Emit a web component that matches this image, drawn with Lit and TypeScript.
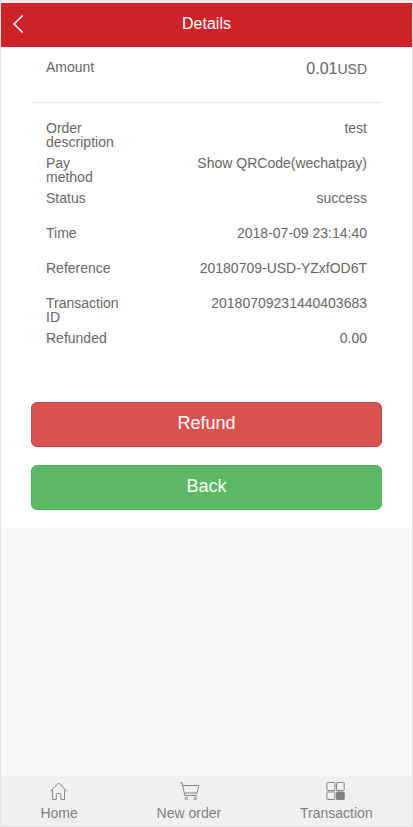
import { LitElement, html, css, svg } from "lit";
import { customElement } from "lit/decorators.js";

const rows: [string, string][] = [
  ["Order description", "test"],
  ["Pay method", "Show QRCode(wechatpay)"],
  ["Status", "success"],
  ["Time", "2018-07-09 23:14:40"],
  ["Reference", "20180709-USD-YZxfOD6T"],
  ["Transaction ID", "20180709231440403683"],
  ["Refunded", "0.00"],
];

const home = svg`<path d="M1.2 10.4 9.7 1.9 18.2 10.4M3.6 9V18.5H7.3V13.5Q7.3 12.5 8.3 12.5H10.8Q11.8 12.5 11.8 13.5V18.5H15.5V9"/>`;
const cart = svg`<path d="M0.9 1.7H3.1L5.8 14.5H18.2M4 4.5H19.8L18 12H5.4"/><circle cx="7.4" cy="17.4" r="1.3"/><circle cx="16.3" cy="17.4" r="1.3"/>`;
const grid = svg`<rect x="0.9" y="1.5" width="8" height="8" rx="0.5"/><rect x="10.5" y="1.5" width="7.7" height="8" rx="0.5"/><rect x="0.9" y="11" width="8" height="7.5" rx="0.5"/><rect class="solid" x="10.5" y="11" width="7.7" height="7.5" rx="0.5"/>`;

@customElement("app-root")
export class AppRoot extends LitElement {
  static styles = css`
    :host {
      display: flex;
      flex-direction: column;
      box-sizing: border-box;
      height: 827px;
      border: 1px solid #e2e2e2;
      border-top: 3px solid #e9edf0;
      background: #f9f9f9;
      font: 14px/14px "Liberation Sans", Arial, sans-serif;
      color: #666;
    }
    header {
      display: grid;
      grid-template-columns: 44px 1fr 44px;
      align-items: center;
      height: 44px;
      flex: none;
      background: #cf232a;
      color: #fff;
      font-size: 16px;
      line-height: 20px;
      text-align: center;
    }
    header h1 { margin: 0; padding-bottom: 3px; font: inherit; }
    .chevron { display: block; margin: 0 0 2px 11px; }
    svg { fill: none; stroke: #858585; }
    .chevron { stroke: #fff; stroke-width: 1.4; }
    main {
      box-sizing: border-box;
      height: 481px;
      flex: none;
      padding: 0 30px;
      background: #fff;
    }
    .row {
      display: flex;
      justify-content: space-between;
      height: 35px;
      padding: 0 15px;
    }
    .label { width: 74px; }
    .amount { height: 42px; padding-top: 13px; border-bottom: 1px solid #e9e9e9; }
    .amount .num { font-size: 16px; line-height: 18px; }
    .amount small { font-size: 14px; }
    .details { padding-top: 18px; height: 281px; }
    button {
      display: block;
      box-sizing: border-box;
      width: 100%;
      height: 45px;
      margin: 0 0 18px;
      padding: 0 0 3px;
      border: 1px solid #cd3f3f;
      border-radius: 6px;
      background: #d85251;
      color: #fff;
      font: 18px/20px "Liberation Sans", Arial, sans-serif;
    }
    button.back { background: #5cb963; border-color: #4cae54; }
    nav {
      display: flex;
      justify-content: space-between;
      box-sizing: border-box;
      height: 50px;
      flex: none;
      margin-top: auto;
      padding: 5px 39.3px 0 39.4px;
      background: #f0f0f0;
      color: #808080;
    }
    .tab { display: flex; flex-direction: column; align-items: center; gap: 5px; }
    .tab svg { display: block; }
    .tab .solid { fill: #808080; }
  `;

  tab(icon: unknown, label: string) {
    return html`<div class="tab">
      <svg width="20" height="20" viewBox="0 0 20 20">${icon}</svg>
      <span>${label}</span>
    </div>`;
  }

  render() {
    return html`
      <header>
        <svg class="chevron" width="14" height="20" viewBox="0 0 14 20"><path d="M10.7 1.5 2 10 10.7 18.5" /></svg>
        <h1>Details</h1>
      </header>
      <main>
        <div class="row amount">
          <span class="label">Amount</span>
          <span class="num">0.01<small>USD</small></span>
        </div>
        <div class="details">
          ${rows.map(([k, v]) => html`<div class="row"><span class="label">${k}</span><span>${v}</span></div>`)}
        </div>
        <button>Refund</button>
        <button class="back">Back</button>
      </main>
      <nav>
        ${this.tab(home, "Home")}
        ${this.tab(cart, "New order")}
        ${this.tab(grid, "Transaction")}
      </nav>
    `;
  }
}
